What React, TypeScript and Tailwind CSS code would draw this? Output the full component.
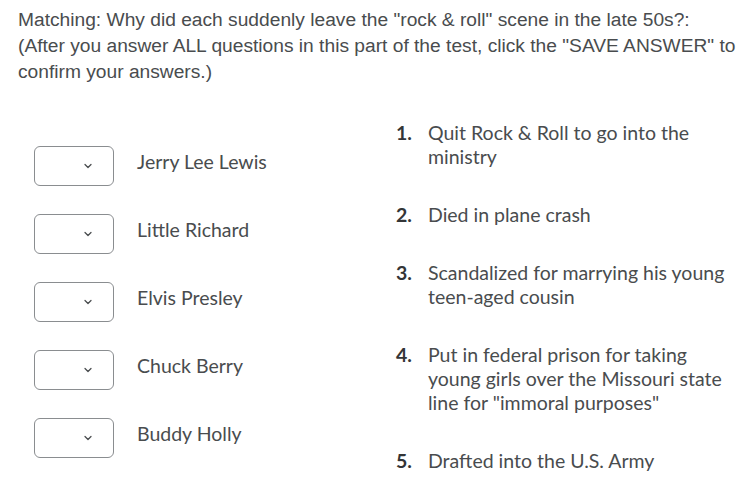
import { ChevronDown } from "lucide-react";

const people = ["Jerry Lee Lewis", "Little Richard", "Elvis Presley", "Chuck Berry", "Buddy Holly"];

const answers = [
  "Quit Rock & Roll to go into the ministry",
  "Died in plane crash",
  "Scandalized for marrying his young teen-aged cousin",
  'Put in federal prison for taking young girls over the Missouri state line for "immoral purposes"',
  "Drafted into the U.S. Army",
];

const App = () => {
  return (
    <div className="w-[742px] h-[498px] bg-white overflow-hidden">
      <div className="pl-[18px] pt-[7px] whitespace-nowrap text-[19.2px] leading-[26px] text-[#494c4e] font-['Liberation_Sans',Arial,sans-serif]">
        Matching: Why did each suddenly leave the "rock &amp; roll" scene in the late 50s?:
        <br />
        (After you answer ALL questions in this part of the test, click the "SAVE ANSWER" to
        <br />
        confirm your answers.)
      </div>

      <div className="mt-[36px] flex font-['Lato',sans-serif] text-[19.5px] text-[#494c4e]">
        {/* left: dropdowns + names */}
        <div className="w-[396px] shrink-0 pl-[34px] pt-[25px] flex flex-col gap-[28px]">
          {people.map((name) => (
            <div key={name} className="flex items-center">
              <div className="w-[80px] h-[40px] rounded-[6px] border border-[#8a8d90] bg-white flex items-center justify-end pr-[19px]">
                <ChevronDown size={12} strokeWidth={2.5} className="text-[#494c4e]" />
              </div>
              <span className="ml-[23px] -mt-[8px] leading-[24px]">{name}</span>
            </div>
          ))}
        </div>

        {/* right: numbered answers */}
        <ol className="flex flex-col gap-[34px]">
          {answers.map((text, i) => (
            <li key={i} className="flex leading-[24px]">
              <span className="w-[32px] shrink-0 font-bold text-[#333537]">{i + 1}.</span>
              <span className="w-[305px]">{text}</span>
            </li>
          ))}
        </ol>
      </div>
    </div>
  );
};

export default App;
